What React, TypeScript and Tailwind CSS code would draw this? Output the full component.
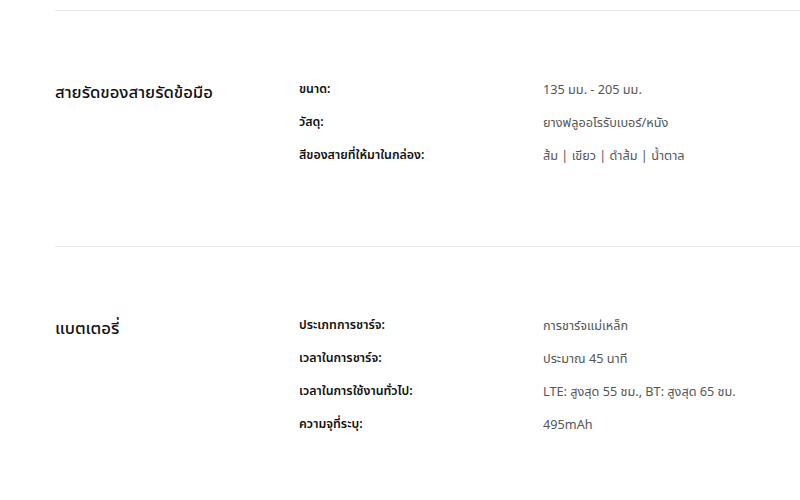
const sections = [
  {
    title: "สายรัดของสายรัดข้อมือ",
    rows: [
      ["ขนาด:", "135 มม. - 205 มม."],
      ["วัสดุ:", "ยางฟลูออโรรับเบอร์/หนัง"],
      ["สีของสายที่ให้มาในกล่อง:", "ส้ม | เขียว | ดำส้ม | น้ำตาล"],
    ],
  },
  {
    title: "แบตเตอรี่",
    rows: [
      ["ประเภทการชาร์จ:", "การชาร์จแม่เหล็ก"],
      ["เวลาในการชาร์จ:", "ประมาณ 45 นาที"],
      ["เวลาในการใช้งานทั่วไป:", "LTE: สูงสุด 55 ชม., BT: สูงสุด 65 ชม."],
      ["ความจุที่ระบุ:", "495mAh"],
    ],
  },
];

export default function App() {
  return (
    <div
      className="w-[800px] h-[500px] overflow-hidden bg-white pl-[55px] pt-[10px] text-[#111]"
      style={{ fontFamily: '"Noto Sans", "Noto Sans Thai", sans-serif' }}
    >
      {sections.map((s) => (
        <section key={s.title} className="border-t border-[#e6e6e6] pt-[68px] pb-[81px] grid grid-cols-[244px_244px_1fr]">
          <h2 className="text-[16.7px] font-medium leading-[24px] pt-[1px]">{s.title}</h2>
          <div className="col-span-2 flex flex-col gap-[13px]">
            {s.rows.map(([k, v]) => (
              <div key={k} className="grid grid-cols-[244px_1fr] leading-[20px]">
                <span className="font-semibold text-[12.4px]">{k}</span>
                <span className="text-[#555] text-[12.7px]">{v}</span>
              </div>
            ))}
          </div>
        </section>
      ))}
    </div>
  );
}
